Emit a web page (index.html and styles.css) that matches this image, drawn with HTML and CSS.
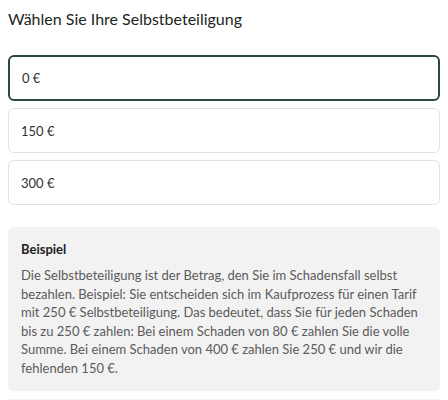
FILE: index.html
```html
<!DOCTYPE html>
<html lang="de">
<head>
    <meta charset="UTF-8">
    <meta name="viewport" content="width=device-width, initial-scale=1.0">
    <title>Selbstbeteiligung</title>
    <link rel="stylesheet" href="styles.css">
</head>
<body>

<div class="page">
    <h2 class="title">Wählen Sie Ihre Selbstbeteiligung</h2>

    <div class="options">
        <label class="option selected">0 €</label>
        <label class="option">150 €</label>
        <label class="option">300 €</label>
    </div>

    <div class="example">
        <div class="example-title">Beispiel</div>
        <p class="example-text">Die Selbstbeteiligung ist der Betrag, den Sie im Schadensfall selbst bezahlen. Beispiel: Sie entscheiden sich im Kaufprozess für einen Tarif mit 250 € Selbstbeteiligung. Das bedeutet, dass Sie für jeden Schaden bis zu 250 € zahlen: Bei einem Schaden von 80 € zahlen Sie die volle Summe. Bei einem Schaden von 400 € zahlen Sie 250 € und wir die fehlenden 150 €.</p>
    </div>

    <div class="next-section"></div>
</div>

</body>
</html>
```

FILE: styles.css
```css
body {
    margin: 0;
    font-family: Lato, 'Noto Sans', Arial, sans-serif;
    background-color: #ffffff;
    color: #222;
}
.page {
    padding: 9px 8px 0 8px;
}
.title {
    margin: 0 0 26px 0;
    font-size: 16px;
    font-weight: 400;
    line-height: 20px;
    color: #1d2621;
}
.options {
    display: flex;
    flex-direction: column;
    gap: 7px;
}
.option {
    box-sizing: border-box;
    display: flex;
    align-items: center;
    height: 45px;
    padding: 0 12px;
    border: 1.5px solid #e2e2e2;
    border-radius: 6px;
    font-size: 13px;
    color: #333;
}
.option.selected {
    height: 46px;
    border: 2px solid #2c4a3c;
}
.example {
    margin-top: 22px;
    padding: 14px 13px 13px 13px;
    background-color: #f2f2f2;
    border-radius: 6px;
}
.example-title {
    font-size: 13px;
    font-weight: 700;
    color: #222;
    line-height: 16px;
    margin-bottom: 9px;
}
.example-text {
    margin: 0;
    font-size: 13px;
    line-height: 18.6px;
    color: #5a5a5a;
}
.next-section {
    margin-top: 8px;
    height: 20px;
    border-top: 1px solid #f3f3f3;
}
```
